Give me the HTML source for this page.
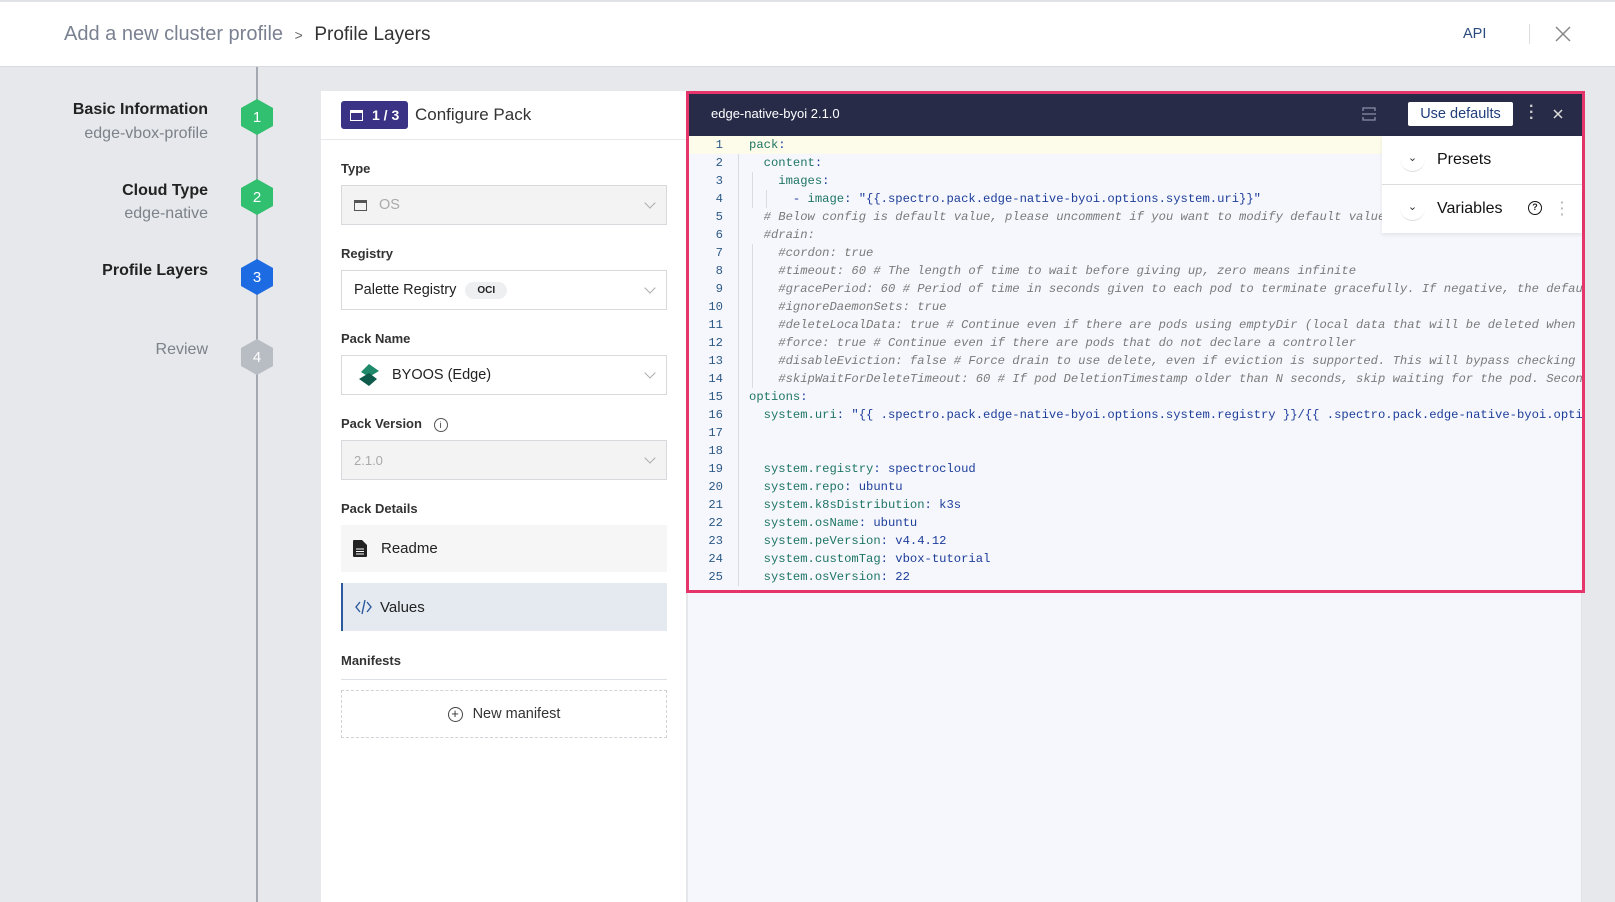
<!DOCTYPE html>
<html><head><meta charset="utf-8">
<style>
*{box-sizing:border-box;margin:0;padding:0}
body{width:1615px;height:902px;overflow:hidden;background:#e6e8eb;font-family:"Liberation Sans",sans-serif;position:relative;color:#222}
.abs{position:absolute}
.hdr{left:0;top:0;width:1615px;height:67px;background:#fff;border-top:2px solid #e0e2e6;border-bottom:1px solid #d6d9de}
.vline{left:256px;top:67px;width:2px;height:835px;background:#a4a9b1}
.hex{width:32px;height:36px;clip-path:polygon(50% 0,100% 25%,100% 75%,50% 100%,0 75%,0 25%);color:#fff;font-size:15px;display:flex;align-items:center;justify-content:center;left:241px}
.lbl{right:1407px;text-align:right;font-size:16px;font-weight:bold;color:#222;white-space:nowrap}
.sub{right:1407px;text-align:right;font-size:16px;color:#7c818a;white-space:nowrap}
.card{left:321px;top:91px;width:366px;height:811px;background:#fff;border-right:1px solid #e3e5e9}
.fl{left:341px;font-size:13px;font-weight:bold;color:#333}
.sel{left:341px;width:326px;height:40px;border:1px solid #d7d9dd;font-size:14.5px;display:flex;align-items:center;padding-left:12px;color:#222}
.sel .ch{position:absolute;right:12px;top:13px;width:8px;height:8px;border-right:1px solid #aaa;border-bottom:1px solid #aaa;transform:rotate(45deg)}
.code{left:689px;top:136px;width:893px;height:454px;background:#f5f7fc;font-family:"Liberation Mono",monospace;font-size:12.2px;overflow:hidden}
.ln{position:absolute;left:0;width:34px;text-align:right;color:#2d5a86}
.tx{position:absolute;left:60px;white-space:pre;color:#1d3d9a}
.k{color:#1e7564}.c{color:#7a7a7a;font-style:italic}
</style></head><body>
<div class="abs hdr"></div>
<div class="abs" style="left:64px;top:23px;font-size:20px;color:#7a8191;white-space:nowrap">Add a new cluster profile <span style="font-size:14px;color:#666;margin:0 6px">&gt;</span> <span style="color:#333;font-size:19px">Profile Layers</span></div>
<div class="abs" style="left:1463px;top:26px;font-size:14.5px;color:#2b4a7c">API</div>
<div class="abs" style="left:1529px;top:24px;width:1px;height:20px;background:#ddd"></div>
<div class="abs" style="left:1554px;top:25px;width:18px;height:18px"><svg width="18" height="18"><path d="M2 2L16 16M16 2L2 16" stroke="#888" stroke-width="1.5"/></svg></div>

<div class="abs vline"></div>
<div class="abs lbl" style="top:101px">Basic Information</div>
<div class="abs sub" style="top:125px">edge-vbox-profile</div>
<div class="abs hex" style="top:99px;background:#31bf70">1</div>
<div class="abs lbl" style="top:182px">Cloud Type</div>
<div class="abs sub" style="top:205px">edge-native</div>
<div class="abs hex" style="top:179px;background:#31bf70">2</div>
<div class="abs lbl" style="top:262px">Profile Layers</div>
<div class="abs hex" style="top:259px;background:#1d6be3">3</div>
<div class="abs lbl" style="top:341px;font-weight:normal;color:#7c818a">Review</div>
<div class="abs hex" style="top:339px;background:#b8bcc3">4</div>

<div class="abs card"></div>
<div class="abs" style="left:341px;top:101px;width:67px;height:28px;background:#3a3385;border-radius:3px;color:#fff;font-size:14px;font-weight:bold;display:flex;align-items:center;padding-left:9px"><span style="display:inline-block;width:13px;height:11px;border:1.5px solid #fff;border-top-width:3px;margin-right:9px"></span>1 / 3</div>
<div class="abs" style="left:415px;top:105px;font-size:17px;color:#333">Configure Pack</div>
<div class="abs" style="left:321px;top:139px;width:366px;height:1px;background:#e6e8eb"></div>

<div class="abs fl" style="top:161px">Type</div>
<div class="abs sel" style="top:185px;background:#f3f3f3;color:#aaa"><span style="display:inline-block;width:13px;height:11px;border:1.5px solid #555;border-top-width:3px;margin-right:12px"></span>OS<span class="ch"></span></div>
<div class="abs fl" style="top:246px">Registry</div>
<div class="abs sel" style="top:270px">Palette Registry<span style="margin-left:9px;background:#eeeff1;border-radius:11px;padding:3px 12px;font-size:10px;font-weight:bold">OCI</span><span class="ch"></span></div>
<div class="abs fl" style="top:331px">Pack Name</div>
<div class="abs sel" style="top:355px;padding-left:16px"><svg width="22" height="24" style="margin-right:12px"><path d="M11 1L21 8L11 14L3 9Z" fill="#1f8a6a"/><path d="M11 10L19 16L11 23L1 16Z" fill="#0e5b4b"/></svg>BYOOS (Edge)<span class="ch"></span></div>
<div class="abs fl" style="top:416px">Pack Version <span style="display:inline-block;width:14px;height:14px;border:1px solid #555;border-radius:50%;font-size:9px;text-align:center;line-height:12px;margin-left:8px;font-weight:normal">i</span></div>
<div class="abs sel" style="top:440px;background:#f3f3f3;color:#aaa;font-size:13px">2.1.0<span class="ch"></span></div>
<div class="abs fl" style="top:501px">Pack Details</div>
<div class="abs" style="left:341px;top:525px;width:326px;height:47px;background:#f6f6f7;display:flex;align-items:center;padding-left:12px;font-size:15px"><svg width="14" height="17" style="margin-right:14px"><path d="M0 1Q0 0 1 0H9L14 5V16Q14 17 13 17H1Q0 17 0 16Z" fill="#222"/><path d="M3 9H11M3 11.5H11M3 14H11" stroke="#fff" stroke-width="1"/></svg>Readme</div>
<div class="abs" style="left:341px;top:583px;width:326px;height:48px;background:#e5e9f0;border-left:2px solid #2c5a9e;display:flex;align-items:center;padding-left:12px;font-size:15px"><svg width="17" height="16" style="margin-right:8px"><path d="M5 3L1 8L5 13M12 3L16 8L12 13M10 1L7 15" stroke="#2c5a9e" stroke-width="1.4" fill="none"/></svg>Values</div>
<div class="abs fl" style="top:653px">Manifests</div>
<div class="abs" style="left:341px;top:679px;width:326px;height:1px;background:#dcdfe3"></div>
<div class="abs" style="left:341px;top:690px;width:326px;height:48px;border:1px dashed #cfd2d6;display:flex;align-items:center;justify-content:center;font-size:14.5px;color:#333"><span style="display:inline-block;width:15px;height:15px;border:1.3px solid #444;border-radius:50%;text-align:center;line-height:12px;font-size:13px;margin-right:10px">+</span>New manifest</div>

<div class="abs" style="left:688px;top:592px;width:894px;height:310px;background:#f6f7fc;border-right:1px solid #e0e2e7"></div>

<div class="abs" style="left:686px;top:91px;width:899px;height:502px;border:3px solid #e6356a;background:#f5f7fc"></div>
<div class="abs" style="left:689px;top:94px;width:893px;height:42px;background:#272b48"></div>
<div class="abs" style="left:711px;top:106px;font-size:13px;color:#fff">edge-native-byoi 2.1.0</div>
<div class="abs" style="left:1361px;top:106px"><svg width="16" height="16"><path d="M2 5V2H14V5M2 11V14H14V11M1 8H15" stroke="#8a8fa8" stroke-width="1.3" fill="none"/></svg></div>
<div class="abs" style="left:1408px;top:102px;width:105px;height:24px;background:#fff;border-radius:2px;color:#1f3e7a;font-size:14.5px;text-align:center;line-height:24px">Use defaults</div>
<div class="abs" style="left:1529px;top:104px;color:#ccc;font-size:16px;line-height:6px;font-weight:bold">·<br>·<br>·</div>
<div class="abs" style="left:1552px;top:107px"><svg width="12" height="12"><path d="M2 2L10 10M10 2L2 10" stroke="#ddd" stroke-width="1.5"/></svg></div>

<div class="abs code">
<div class="abs" style="left:0;top:0;width:693px;height:18px;background:#fdfbe9"></div>
<div class="abs" style="left:49px;top:18px;width:1px;height:432px;background:#d8dbe2"></div>
<div class="abs" style="left:63px;top:36px;width:1px;height:36px;background:#d8dbe2"></div>
<div class="abs" style="left:77px;top:54px;width:1px;height:18px;background:#d8dbe2"></div>
<div class="abs" style="left:63px;top:108px;width:1px;height:144px;background:#d8dbe2"></div>
<div id="lines"></div>
</div>
<script>
var L=[
'<span class="k">pack</span>:',
'  <span class="k">content</span>:',
'    <span class="k">images</span>:',
'      - <span class="k">image</span>: "{{.spectro.pack.edge-native-byoi.options.system.uri}}"',
'  <span class="c"># Below config is default value, please uncomment if you want to modify default values</span>',
'  <span class="c">#drain:</span>',
'    <span class="c">#cordon: true</span>',
'    <span class="c">#timeout: 60 # The length of time to wait before giving up, zero means infinite</span>',
'    <span class="c">#gracePeriod: 60 # Period of time in seconds given to each pod to terminate gracefully. If negative, the default value specified in the pod will be used</span>',
'    <span class="c">#ignoreDaemonSets: true</span>',
'    <span class="c">#deleteLocalData: true # Continue even if there are pods using emptyDir (local data that will be deleted when the node is drained)</span>',
'    <span class="c">#force: true # Continue even if there are pods that do not declare a controller</span>',
'    <span class="c">#disableEviction: false # Force drain to use delete, even if eviction is supported. This will bypass checking PodDisruptionBudgets</span>',
'    <span class="c">#skipWaitForDeleteTimeout: 60 # If pod DeletionTimestamp older than N seconds, skip waiting for the pod. Seconds must be greater than 0</span>',
'<span class="k">options</span>:',
'  <span class="k">system.uri</span>: "{{ .spectro.pack.edge-native-byoi.options.system.registry }}/{{ .spectro.pack.edge-native-byoi.options.system.repo }}"',
'','',
'  <span class="k">system.registry</span>: spectrocloud',
'  <span class="k">system.repo</span>: ubuntu',
'  <span class="k">system.k8sDistribution</span>: k3s',
'  <span class="k">system.osName</span>: ubuntu',
'  <span class="k">system.peVersion</span>: v4.4.12',
'  <span class="k">system.customTag</span>: vbox-tutorial',
'  <span class="k">system.osVersion</span>: 22'];
var h='';for(var i=0;i<L.length;i++){var t=2+i*18;h+='<div class="ln" style="top:'+t+'px">'+(i+1)+'</div><div class="tx" style="top:'+t+'px">'+L[i]+'</div>';}
document.getElementById('lines').innerHTML=h;
</script>

<div class="abs" style="left:1382px;top:136px;width:200px;height:97px;background:#fff;box-shadow:0 2px 4px rgba(0,0,0,.08)"></div>
<div class="abs" style="left:1382px;top:184px;width:200px;height:1px;background:#ddd"></div>
<div class="abs" style="left:1400px;top:147px;width:25px;height:25px;border-radius:50%;border-bottom:1px solid #ddd;text-align:center;font-size:11px;line-height:22px;color:#333">&#8964;</div>
<div class="abs" style="left:1437px;top:151px;font-size:16px;color:#111">Presets</div>
<div class="abs" style="left:1400px;top:196px;width:25px;height:25px;border-radius:50%;border-bottom:1px solid #ddd;text-align:center;font-size:11px;line-height:22px;color:#333">&#8964;</div>
<div class="abs" style="left:1437px;top:200px;font-size:16px;color:#111">Variables</div>
<div class="abs" style="left:1528px;top:201px;width:14px;height:14px;border:1.5px solid #111;border-radius:50%;font-size:9px;text-align:center;line-height:11px;font-weight:bold">?</div>
<div class="abs" style="left:1560px;top:199px;color:#bbb;font-size:14px;line-height:6px;font-weight:bold">·<br>·<br>·</div>
</body></html>
